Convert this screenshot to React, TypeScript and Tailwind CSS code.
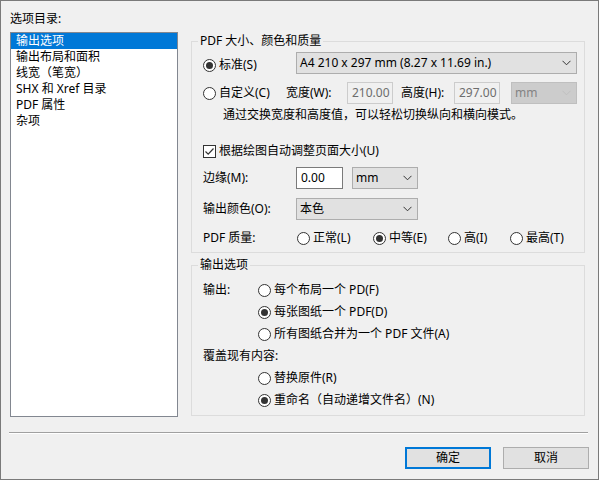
import React from "react";

const font = { fontFamily: '"Noto Sans", "Noto Sans CJK SC", sans-serif' };

const Chevron = ({ color = "#333" }: { color?: string }) => (
  <svg width="9" height="6" viewBox="0 0 9 6" fill="none">
    <path d="M0.5 0.8 L4.5 4.8 L8.5 0.8" stroke={color} strokeWidth="1" />
  </svg>
);

const Radio = ({ checked, label, className = "" }: { checked?: boolean; label: string; className?: string }) => (
  <div className={"flex items-center " + className}>
    <span className="w-[13px] h-[13px] rounded-full border border-[#333333] bg-white flex items-center justify-center shrink-0">
      {checked && <span className="w-[7px] h-[7px] rounded-full bg-[#333333]" />}
    </span>
    <span className="ml-[3px] whitespace-nowrap">{label}</span>
  </div>
);

const Combo = ({ text, className = "", disabled }: { text: string; className?: string; disabled?: boolean }) => (
  <div
    className={
      "h-[22px] border flex items-center justify-between pl-[3px] pr-[5px] " +
      (disabled ? "bg-[#cccccc] border-[#bfbfbf] text-[#838383] " : "bg-[#e1e1e1] border-[#adadad] ") +
      className
    }
  >
    <span className="whitespace-nowrap">{text}</span>
    <Chevron color={disabled ? "#bfbfbf" : "#333"} />
  </div>
);

const Field = ({ value, className = "", disabled }: { value: string; className?: string; disabled?: boolean }) => (
  <div
    className={
      "h-[22px] border flex items-center pl-[4px] " +
      (disabled ? "bg-[#f0f0f0] border-[#cccccc] text-[#6d6d6d] " : "bg-white border-[#7a7a7a] ") +
      className
    }
  >
    {value}
  </div>
);

const items = ["输出选项", "输出布局和面积", "线宽（笔宽）", "SHX 和 Xref 目录", "PDF 属性", "杂项"];

export default function App() {
  return (
    <div
      style={font}
      className="w-[599px] h-[480px] border border-[#7a7a7a] bg-[#f0f0f0] text-[12px] leading-[16px] text-black flex flex-col"
    >
      <div className="flex pl-[9px] pt-[10px]">
        <div className="w-[168px]">
          <div>选项目录:</div>
          <div className="mt-[5px] h-[385px] border border-[#828790] bg-white">
            {items.map((it, i) => (
              <div key={it} className={"h-[16px] pl-[5px] " + (i === 0 ? "bg-[#0078d7] text-white" : "")}>
                {it}
              </div>
            ))}
          </div>
        </div>

        <div className="ml-[13px] w-[394px] mt-[22px]">
          <fieldset className="border border-[#dcdcdc]">
            <legend className="ml-[6px] px-[2px]">PDF 大小、颜色和质量</legend>
            <div className="pl-[11px] pt-[3px] pb-[6px]">
              <div className="flex h-[22px]">
                <Radio checked label="标准(S)" className="w-[93px] pt-[4px]" />
                <Combo text="A4 210 x 297 mm (8.27 x 11.69 in.)" className="w-[281px]" />
              </div>
              <div className="flex items-center h-[22px] mt-[8px]">
                <Radio label="自定义(C)" className="w-[83px]" />
                <span className="w-[61px]">宽度(W):</span>
                <Field value="210.00" disabled className="w-[46px]" />
                <span className="ml-[8px] w-[53px]">高度(H):</span>
                <Field value="297.00" disabled className="w-[46px]" />
                <Combo text="mm" disabled className="ml-[11px] w-[66px]" />
              </div>
              <div className="mt-[3px] ml-[20px] h-[16px]">通过交换宽度和高度值，可以轻松切换纵向和横向模式。</div>

              <div className="mt-[20px] h-[16px] flex items-center">
                <span className="w-[13px] h-[13px] border border-[#333333] bg-white flex items-center justify-center">
                  <svg width="11" height="11" viewBox="0 0 11 11" fill="none">
                    <path d="M1.5 5.5 L4.2 8.2 L9.5 2.5" stroke="#333" strokeWidth="1.2" />
                  </svg>
                </span>
                <span className="ml-[3px]">根据绘图自动调整页面大小(U)</span>
              </div>

              <div className="flex items-center h-[22px] mt-[8px]">
                <span className="w-[93px]">边缘(M):</span>
                <Field value="0.00" className="w-[47px]" />
                <Combo text="mm" className="ml-[9px] w-[66px]" />
              </div>
              <div className="flex items-center h-[22px] mt-[9px]">
                <span className="w-[93px]">输出颜色(O):</span>
                <Combo text="本色" className="w-[122px]" />
              </div>
              <div className="flex items-center h-[16px] mt-[10px]">
                <span className="w-[94px]">PDF 质量:</span>
                <Radio label="正常(L)" className="w-[76px]" />
                <Radio checked label="中等(E)" className="w-[75px]" />
                <Radio label="高(I)" className="w-[62px]" />
                <Radio label="最高(T)" />
              </div>
            </div>
          </fieldset>

          <fieldset className="border border-[#dcdcdc] mt-[4px]">
            <legend className="ml-[6px] px-[2px]">输出选项</legend>
            <div className="pl-[11px] pt-[6px] pb-[4px]">
              <div className="flex items-center h-[22px]">
                <span className="w-[55px]">输出:</span>
                <Radio label="每个布局一个 PD(F)" />
              </div>
              <div className="flex items-center h-[22px] pl-[55px]">
                <Radio checked label="每张图纸一个 PDF(D)" />
              </div>
              <div className="flex items-center h-[22px] pl-[55px]">
                <Radio label="所有图纸合并为一个 PDF 文件(A)" />
              </div>
              <div className="flex items-center h-[22px]">
                <span>覆盖现有内容:</span>
              </div>
              <div className="flex items-center h-[22px] pl-[55px]">
                <Radio label="替换原件(R)" />
              </div>
              <div className="flex items-center h-[22px] pl-[55px]">
                <Radio checked label="重命名（自动递增文件名）(N)" />
              </div>
            </div>
          </fieldset>
        </div>
      </div>

      <div className="mt-[15px] ml-[8px] w-[579px] border-t border-t-[#a0a0a0] border-b border-b-white" />

      <div className="flex justify-end gap-[12px] pr-[9px] mt-[13px]">
        <button className="w-[86px] h-[22px] border-2 border-[#0078d7] bg-[#e1e1e1] flex items-center justify-center">
          确定
        </button>
        <button className="w-[86px] h-[22px] border border-[#adadad] bg-[#e1e1e1] flex items-center justify-center">
          取消
        </button>
      </div>
    </div>
  );
}
